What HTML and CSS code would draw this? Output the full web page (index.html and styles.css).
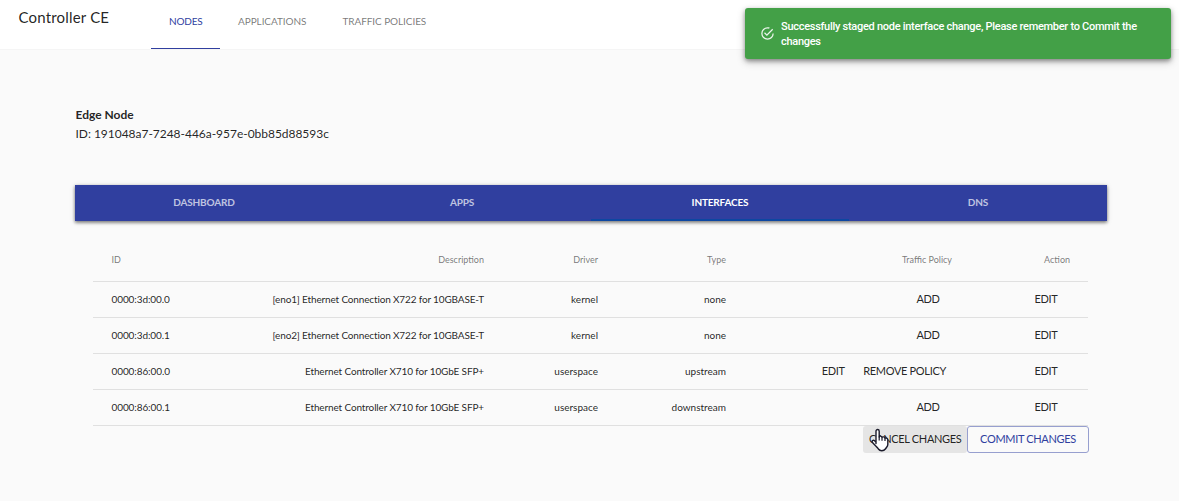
FILE: index.html
```html
<!DOCTYPE html>
<html lang="en">
<head>
<meta charset="utf-8">
<title>Controller CE</title>
<link rel="stylesheet" href="styles.css">
</head>
<body>
<header class="appbar">
  <div class="brand">Controller CE</div>
  <nav class="nav">
    <a class="nav-tab active">NODES</a>
    <a class="nav-tab nav-apps">APPLICATIONS</a>
    <a class="nav-tab">TRAFFIC POLICIES</a>
  </nav>
</header>
<main class="page">
  <div class="node-name">Edge Node</div>
  <div class="node-id">ID: 191048a7-7248-446a-957e-0bb85d88593c</div>
  <nav class="tabs">
    <a class="tab">DASHBOARD</a>
    <a class="tab">APPS</a>
    <a class="tab selected">INTERFACES</a>
    <a class="tab">DNS</a>
  </nav>
  <section class="table">
    <div class="row head"><span>ID</span><span>Description</span><span>Driver</span><span>Type</span><span>Traffic Policy</span><span>Action</span></div>
    <div class="row"><span class="num">0000:3d:00.0</span><span class="desc">[eno1] Ethernet Connection X722 for 10GBASE-T</span><span>kernel</span><span>none</span><span><button class="btn">ADD</button></span><span><button class="btn">EDIT</button></span></div>
    <div class="row"><span class="num">0000:3d:00.1</span><span class="desc">[eno2] Ethernet Connection X722 for 10GBASE-T</span><span>kernel</span><span>none</span><span><button class="btn">ADD</button></span><span><button class="btn">EDIT</button></span></div>
    <div class="row"><span class="num">0000:86:00.0</span><span class="desc short">Ethernet Controller X710 for 10GbE SFP+</span><span>userspace</span><span>upstream</span><span><button class="btn">EDIT</button><button class="btn">REMOVE POLICY</button></span><span><button class="btn">EDIT</button></span></div>
    <div class="row"><span class="num">0000:86:00.1</span><span class="desc short">Ethernet Controller X710 for 10GbE SFP+</span><span>userspace</span><span>downstream</span><span><button class="btn">ADD</button></span><span><button class="btn">EDIT</button></span></div>
    <div class="actions">
      <button class="btn cancel">CANCEL CHANGES
        <svg class="pointer" viewBox="0 0 18 24" width="18" height="24"><path d="M5 15.5V3.2C5 .9 8.2.9 8.2 3.2V9C8.5 7.6 11 7.8 11 9.6C11.5 8.3 14 8.8 14 10.5C14.6 9.5 16.8 10 16.8 12V16.5C16.8 18.5 15.2 19.5 14.6 20.8C12.5 23.4 9 23.4 7.4 21C6.4 19 3.8 17.5 1.5 14.5C.3 12.8 2.3 11.4 3.6 12.8L5 14.2Z" fill="#fff" stroke="#1b1b2b" stroke-width="1.4" stroke-linejoin="round"/><path d="M8.2 8.5V12.5M11 9.6V12.8M14 10.5V13" fill="none" stroke="#1b1b2b" stroke-width="1.2"/></svg>
      </button>
      <button class="btn commit">COMMIT CHANGES</button>
    </div>
  </section>
</main>
<div class="toast">
  <svg class="check" viewBox="0 0 24 24" width="15" height="15"><path fill="currentColor" d="M20,12A8,8 0 0,1 12,20A8,8 0 0,1 4,12A8,8 0 0,1 12,4C12.76,4 13.5,4.11 14.2,4.31L15.77,2.74C14.61,2.26 13.34,2 12,2A10,10 0 0,0 2,12A10,10 0 0,0 12,22A10,10 0 0,0 22,12M7.91,10.08L6.5,11.5L11,16L21,6L19.59,4.58L11,13.17L7.91,10.08Z"/></svg>
  <div class="message">Successfully staged node interface change, Please remember to Commit the changes</div>
</div>
</body>
</html>
```
FILE: styles.css
```css
* { box-sizing: border-box; }
body { margin: 0; height: 501px; overflow: hidden; background: #fafafa; color: rgba(0,0,0,.87); font-family: Lato, "Liberation Sans", sans-serif; }
.appbar { display: flex; height: 50px; background: #fff; border-bottom: 1px solid #f5f5f5; }
.brand { width: 151px; padding: 7px 0 0 18.5px; font-size: 15px; line-height: 20px; letter-spacing: .18px; }
.nav { display: flex; height: 49px; }
.nav-tab { padding: 0 18px; font-size: 10px; line-height: 43px; letter-spacing: -.07px; color: rgba(0,0,0,.54); white-space: nowrap; }
.nav-tab.active { width: 69px; letter-spacing: -.2px; color: #303f9f; border-bottom: 1px solid #303f9f; }
.page { padding: 55px 72px 0 75px; }
.node-name { padding-left: .5px; font-size: 12px; line-height: 20px; font-weight: 700; }
.node-id { padding-left: .5px; font-size: 12px; line-height: 18px; letter-spacing: -.03px; }
.tabs { display: grid; grid-template-columns: repeat(4, 1fr); height: 36px; margin-top: 42px; background: #303f9f; box-shadow: 0 1px 3px rgba(0,0,0,.3), 0 2px 3px rgba(0,0,0,.24), 0 1px 6px rgba(0,0,0,.14); }
.tab { color: rgba(255,255,255,.7); text-align: center; font-size: 10px; font-weight: 700; line-height: 35px; letter-spacing: -.17px; }
.tab.selected { color: #fff; box-shadow: inset 0 -2px #0d47a1; }
.table { padding: 17px 19px 0 18px; }
.row { display: grid; grid-template-columns: 120px 289px 114px 128px 226px 118px; height: 36px; border-bottom: 1px solid #e0e0e0; font-size: 10px; line-height: 13px; align-items: center; }
.row > span { padding: 0 18px; text-align: right; white-space: nowrap; }
.row > span:first-child { text-align: left; padding: 0 0 0 18.5px; }
.row > span:nth-child(n+5) { display: flex; justify-content: flex-end; }
.row.head { height: 44px; color: rgba(0,0,0,.54); font-size: 9px; }
.row .num { letter-spacing: -.1px; }
.row .desc { letter-spacing: -.15px; }
.row .desc.short { letter-spacing: -.13px; }
.btn { position: relative; min-width: 48px; height: 27px; padding: 0 6px 2px; border: 0; border-radius: 3px; background: transparent; color: rgba(0,0,0,.87); font: 11px/25px Lato, "Liberation Sans", sans-serif; letter-spacing: -.32px; white-space: nowrap; }
.actions { display: flex; justify-content: flex-end; margin-right: -1px; }
.cancel { width: 104px; background: #e5e5e5; }
.commit { width: 122px; border: 1px solid #979fcf; color: #303f9f; line-height: 23px; }
.pointer { position: absolute; left: 8px; top: 2px; }
.toast { position: absolute; top: 8px; right: 8px; width: 426px; height: 51px; display: flex; align-items: center; padding: 0 16px 0 15px; border-radius: 3px; background: #43a047; color: #fff; box-shadow: 0 2px 4px rgba(0,0,0,.35), 0 3px 8px rgba(0,0,0,.22); }
.check { flex: none; margin-right: 6px; opacity: .9; }
.message { font: 500 11px/15px Roboto, sans-serif; letter-spacing: -.28px; }
```
